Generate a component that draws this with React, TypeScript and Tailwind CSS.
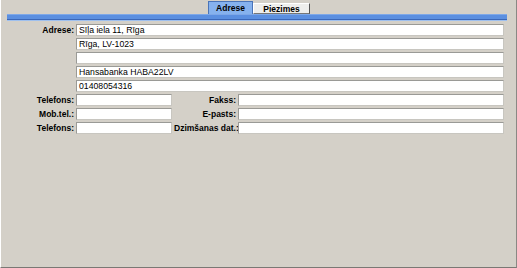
import React from "react";

const Field = ({ value = "", className = "" }: { value?: string; className?: string }) => (
  <div
    className={
      "h-[12px] bg-white border border-t-[#9a9a96] border-l-[#9a9a96] border-r-[#c8c6c0] border-b-[#c8c6c0] pl-[2px] leading-[10px] text-[8.7px] text-black whitespace-nowrap overflow-hidden " +
      className
    }
  >
    {value}
  </div>
);

const Label = ({ children }: { children: React.ReactNode }) => (
  <div className="h-[12px] text-right font-bold text-[8.5px] leading-[12px] text-black whitespace-nowrap">
    {children}
  </div>
);

export default function App() {
  return (
    <div
      className="w-[517px] h-[268px] bg-[#d4d0c8] border-l border-l-white border-r border-r-[#8a8884] border-b border-b-[#7a7874] flex flex-col"
      style={{ fontFamily: '"Liberation Sans", Arial, sans-serif' }}
    >
      <div className="flex pl-[207px] pt-[3px] h-[14px] items-end">
        <div className="h-[13px] w-[45px] bg-[#86b2ee] border border-b-0 border-[#4a74b8] text-[8.5px] font-bold leading-[12px] text-center text-black">
          Adrese
        </div>
        <div className="h-[11px] w-[57px] bg-[#eeeeec] border border-t-white border-l-white border-r-[#555] border-b-[#777] text-[8.5px] font-bold leading-[10px] text-center text-black">
          Piezimes
        </div>
      </div>
      <div className="ml-[6px] w-[500px] h-[7px] flex flex-col">
        <div className="h-[1px] bg-[#7ea8e8]" />
        <div className="h-[4px] bg-[#5b8fe0]" />
        <div className="h-[1px] bg-[#3b67b8]" />
        <div className="h-[1px] bg-[#9fc0ee]" />
      </div>
      <div className="grid grid-cols-[73px_96px_62px_266px] gap-x-[2px] gap-y-[2px] mt-[3px]">
        <Label>Adrese:</Label>
        <Field className="col-span-3" value="Sīļa iela 11, Rīga" />
        <div />
        <Field className="col-span-3" value="Rīga, LV-1023" />
        <div />
        <Field className="col-span-3" />
        <div />
        <Field className="col-span-3" value="Hansabanka HABA22LV" />
        <div />
        <Field className="col-span-3" value="01408054316" />
        <Label>Telefons:</Label>
        <Field />
        <Label>Fakss:</Label>
        <Field />
        <Label>Mob.tel.:</Label>
        <Field />
        <Label>E-pasts:</Label>
        <Field />
        <Label>Telefons:</Label>
        <Field />
        <Label>Dzimšanas dat.:</Label>
        <Field />
      </div>
    </div>
  );
}
